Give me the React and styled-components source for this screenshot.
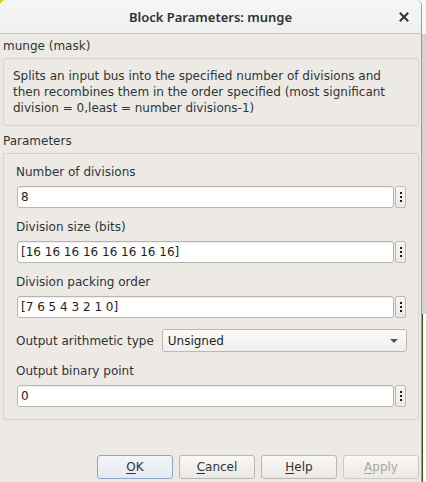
import React from 'react';
import styled, { createGlobalStyle } from 'styled-components';

const Global = createGlobalStyle`
  html, body { margin: 0; padding: 0; }
  body {
    background: #f4f4f4;
    font-family: "DejaVu Sans", "Noto Sans", sans-serif;
    color: #2e3436;
  }
  * { box-sizing: border-box; }
`;

const Desktop = styled.div`
  width: 426px;
  height: 482px;
  display: flex;
  overflow: hidden;
  background: linear-gradient(#d4cc1a, #d4cc1a) 0 0 / 10px 10px no-repeat, #f4f4f4;
`;

const Window = styled.div`
  width: 422px;
  height: 482px;
  flex: none;
  display: flex;
  flex-direction: column;
  background: #edeae6;
  border-right: 1px solid #9c9a98;
  border-radius: 6px 6px 0 0;
  overflow: hidden;
`;

const TitleBar = styled.div`
  height: 34px;
  flex: none;
  display: grid;
  grid-template-columns: 1fr auto 1fr;
  align-items: center;
  background: linear-gradient(#f6f6f6, #efefef);
  border-bottom: 1px solid #cdcac6;
`;

const Title = styled.div`
  grid-column: 2;
  font-family: "Noto Sans", "DejaVu Sans", sans-serif;
  font-weight: 600;
  font-size: 13px;
  color: #2e3436;
  padding-top: 1px;
`;

const CloseButton = styled.div`
  grid-column: 3;
  justify-self: end;
  margin-right: 12px;
  width: 10px;
  height: 10px;
  display: flex;
`;

const Body = styled.div`
  flex: 1;
  display: flex;
  flex-direction: column;
  padding: 0 2px 0 3px;
  font-size: 12px;
  line-height: 16px;
`;

const Caption = styled.div`
  margin-top: ${p => p.$top}px;
  height: 16px;
`;

const DescBox = styled.div`
  margin-top: 4px;
  border: 1px solid #d7d3ce;
  border-radius: 2px;
  padding: 9px 10px 9px 9px;
  line-height: 16px;
`;

const GroupBox = styled.div`
  margin-top: 4px;
  border: 1px solid #d7d3ce;
  border-radius: 2px;
  padding: 10px 12px 12px 12px;
  display: flex;
  flex-direction: column;
`;

const FieldLabel = styled.div`
  margin-top: ${p => p.$top || 0}px;
  height: 16px;
  white-space: nowrap;
`;

const InputRow = styled.div`
  margin-top: 6px;
  margin-left: 1px;
  display: flex;
  gap: 1px;
  height: 22px;
`;

const TextInput = styled.div`
  flex: 1;
  background: #ffffff;
  border: 1px solid #b9b4ae;
  border-radius: 3px;
  padding: 0 3px;
  display: flex;
  align-items: center;
  color: #1e1e1e;
  box-shadow: inset 0 1px 0 #f0eeec;
`;

const DotsButton = styled.div`
  width: 11px;
  border: 1px solid #bcb8b3;
  border-radius: 2px;
  background: linear-gradient(#f8f7f6, #ebe8e4);
  display: flex;
  flex-direction: column;
  align-items: center;
  justify-content: center;
  gap: 2px;
`;

const Dot = styled.span`
  width: 2px;
  height: 2px;
  background: #1a1a1a;
`;

const ComboRow = styled.div`
  margin-top: 11px;
  display: flex;
  align-items: center;
  gap: 8px;
  height: 23px;
  margin-right: -1px;
`;

const Combo = styled.div`
  flex: 1;
  height: 23px;
  border: 1px solid #bcb7b1;
  border-radius: 3px;
  background: linear-gradient(#fbfbfa, #f1efed);
  display: flex;
  align-items: center;
  justify-content: space-between;
  padding: 0 8px 0 5px;
  color: #1e1e1e;
`;

const Arrow = styled.span`
  width: 0;
  height: 0;
  border-left: 4px solid transparent;
  border-right: 4px solid transparent;
  border-top: 4px solid #555753;
`;

const ButtonRow = styled.div`
  margin-top: auto;
  padding-bottom: 3px;
  display: flex;
  justify-content: flex-end;
  gap: 6px;
`;

const Button = styled.div`
  width: 76px;
  height: 24px;
  border: 1px solid ${p => (p.$default ? '#8aa7c8' : '#b9b5b0')};
  border-radius: 3px;
  background: ${p =>
    p.$default
      ? 'linear-gradient(#f3f6f9, #e4e9ef)'
      : 'linear-gradient(#f9f8f7, #ebe8e5)'};
  display: flex;
  align-items: center;
  justify-content: center;
  font-size: 12px;
  color: ${p => (p.$disabled ? '#a8a6a3' : '#2e3436')};
  border-color: ${p => (p.$disabled ? '#cfcbc7' : undefined)};
`;

const Mn = styled.span`
  text-decoration: underline;
  text-underline-offset: 2px;
`;

const SideStrip = styled.div`
  flex: 1;
  display: flex;
  flex-direction: column;
`;

const StripPart = styled.div`
  height: ${p => (p.$h ? `${p.$h}px` : 'auto')};
  flex: ${p => (p.$h ? 'none' : '1')};
  background: ${p => p.$bg};
  border-left: ${p => (p.$line ? '1px solid #2d5a1e' : 'none')};
`;

function Field({ label, value, top }) {
  return (
    <>
      <FieldLabel $top={top}>{label}</FieldLabel>
      <InputRow>
        <TextInput>{value}</TextInput>
        <DotsButton>
          <Dot />
          <Dot />
          <Dot />
        </DotsButton>
      </InputRow>
    </>
  );
}

export default function App() {
  return (
    <>
      <Global />
      <Desktop>
        <Window>
          <TitleBar>
            <Title>Block Parameters: munge</Title>
            <CloseButton>
              <svg width="10" height="10" viewBox="0 0 10 10">
                <path d="M1.5 1.5 L8.5 8.5 M8.5 1.5 L1.5 8.5" stroke="#2e3436" strokeWidth="2" strokeLinecap="square" />
              </svg>
            </CloseButton>
          </TitleBar>
          <Body>
            <Caption $top={4}>munge (mask)</Caption>
            <DescBox>
              Splits an input bus into the specified number of divisions and then recombines them in the order specified (most significant division = 0,least = number divisions-1)
            </DescBox>
            <Caption $top={7}>Parameters</Caption>
            <GroupBox>
              <Field label="Number of divisions" value="8" top={0} />
              <Field label="Division size (bits)" value="[16 16 16 16 16 16 16 16]" top={11} />
              <Field label="Division packing order" value="[7 6 5 4 3 2 1 0]" top={11} />
              <ComboRow>
                <FieldLabel>Output arithmetic type</FieldLabel>
                <Combo>
                  <span>Unsigned</span>
                  <Arrow />
                </Combo>
              </ComboRow>
              <Field label="Output binary point" value="0" top={11} />
            </GroupBox>
            <ButtonRow>
              <Button $default><span><Mn>O</Mn>K</span></Button>
              <Button><span><Mn>C</Mn>ancel</span></Button>
              <Button><span><Mn>H</Mn>elp</span></Button>
              <Button $disabled><span><Mn>A</Mn>pply</span></Button>
            </ButtonRow>
          </Body>
        </Window>
        <SideStrip>
          <StripPart $h={34} $bg="#f7f7f7" />
          <StripPart $h={280} $bg="#d3d3d3" />
          <StripPart $bg="#ffffff" $line />
        </SideStrip>
      </Desktop>
    </>
  );
}
